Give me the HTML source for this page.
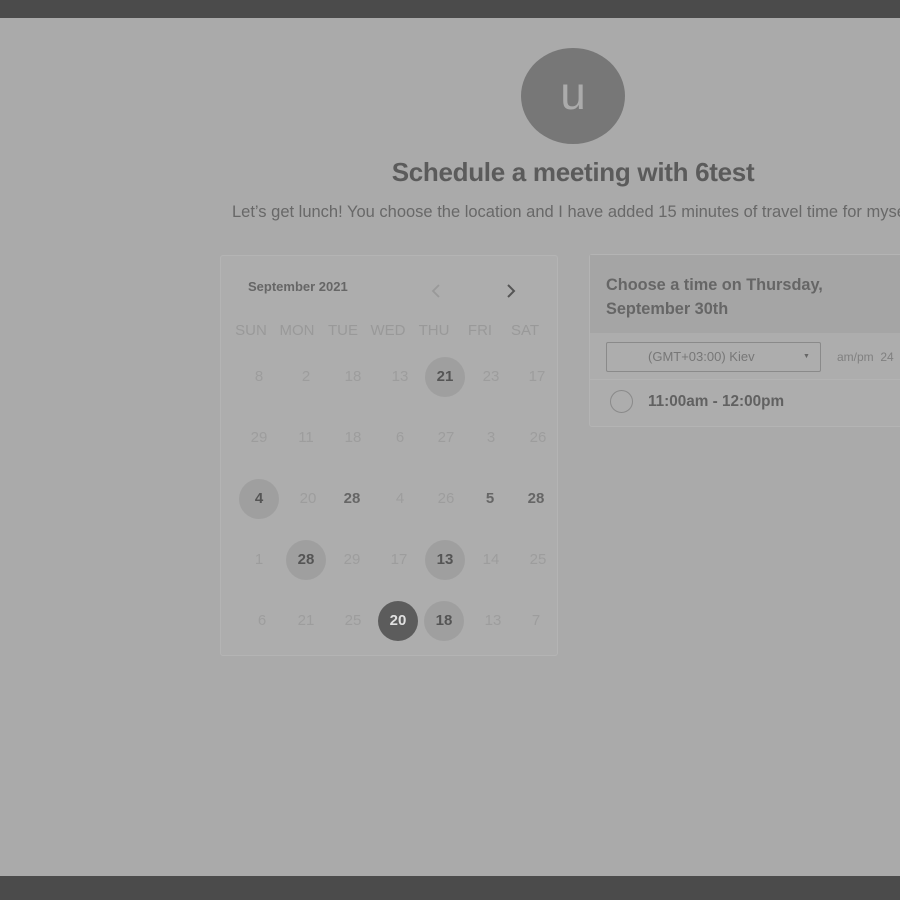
<!DOCTYPE html>
<html><head><style>
body{margin:0;width:900px;height:900px;background:#aaaaaa;position:relative;overflow:hidden;font-family:"Liberation Sans",sans-serif}
.a{position:absolute}
.bar{left:0;width:900px;background:#4b4b4b}
.c{position:absolute;width:40px;height:40px;border-radius:50%;text-align:center;line-height:40px;font-size:15px;color:#9d9d9d;transform:translate(-20px,-20px)}
.b{color:#555;font-weight:bold}
.s{background:#9f9f9f}
.h{position:absolute;font-size:15px;color:#999;transform:translateX(-50%);top:322px}
</style></head><body>
<div class="a bar" style="top:0;height:18px"></div>
<div class="a bar" style="top:876px;height:24px"></div>
<div class="a" style="left:521px;top:48px;width:104px;height:96px;border-radius:50%;background:#777;color:#ababab;font-size:46px;text-align:center;line-height:90px">u</div>
<div class="a" style="left:0;width:1146px;top:157px;text-align:center;font-size:26px;font-weight:bold;color:#5b5b5b;letter-spacing:-0.3px">Schedule a meeting with 6test</div>
<div class="a" style="left:232px;top:203px;white-space:nowrap;font-size:16.5px;color:#686868">Let’s get lunch! You choose the location and I have added 15 minutes of travel time for myself</div>
<div class="a" style="left:220px;top:255px;width:336px;height:399px;background:#adadad;border:1px solid #b4b4b4;border-radius:3px"></div>
<div class="a" style="left:248px;top:279px;font-size:13px;font-weight:bold;color:#666">September 2021</div>
<svg class="a" style="left:429px;top:283px" width="14" height="16"><path d="M10 2L4 8l6 6" stroke="#999" stroke-width="1.8" fill="none"/></svg>
<svg class="a" style="left:504px;top:283px" width="14" height="16"><path d="M4 2l6 6-6 6" stroke="#555" stroke-width="2" fill="none"/></svg>
<div class="h" style="left:251px">SUN</div><div class="h" style="left:297px">MON</div><div class="h" style="left:343px">TUE</div><div class="h" style="left:388px">WED</div><div class="h" style="left:434px">THU</div><div class="h" style="left:480px">FRI</div><div class="h" style="left:525px">SAT</div>
<div class="c" style="left:259px;top:377px">8</div><div class="c" style="left:306px;top:377px">2</div><div class="c" style="left:353px;top:377px">18</div><div class="c" style="left:400px;top:377px">13</div><div class="c b s" style="left:445px;top:377px">21</div><div class="c" style="left:491px;top:377px">23</div><div class="c" style="left:537px;top:377px">17</div>
<div class="c" style="left:259px;top:438px">29</div><div class="c" style="left:306px;top:438px">11</div><div class="c" style="left:353px;top:438px">18</div><div class="c" style="left:400px;top:438px">6</div><div class="c" style="left:446px;top:438px">27</div><div class="c" style="left:491px;top:438px">3</div><div class="c" style="left:538px;top:438px">26</div>
<div class="c b s" style="left:259px;top:499px">4</div><div class="c" style="left:308px;top:499px">20</div><div class="c b" style="left:352px;top:499px;color:#666">28</div><div class="c" style="left:400px;top:499px">4</div><div class="c" style="left:446px;top:499px">26</div><div class="c b" style="left:490px;top:499px;color:#666">5</div><div class="c b" style="left:536px;top:499px;color:#666">28</div>
<div class="c" style="left:259px;top:560px">1</div><div class="c b s" style="left:306px;top:560px">28</div><div class="c" style="left:352px;top:560px">29</div><div class="c" style="left:399px;top:560px">17</div><div class="c b s" style="left:445px;top:560px">13</div><div class="c" style="left:491px;top:560px">14</div><div class="c" style="left:538px;top:560px">25</div>
<div class="c" style="left:262px;top:621px">6</div><div class="c" style="left:306px;top:621px">21</div><div class="c" style="left:353px;top:621px">25</div><div class="c b" style="left:398px;top:621px;background:#5c5c5c;color:#e0e0e0">20</div><div class="c b s" style="left:444px;top:621px">18</div><div class="c" style="left:493px;top:621px">13</div><div class="c" style="left:536px;top:621px">7</div>
<div class="a" style="left:589px;top:254px;width:320px;height:171px;background:#adadad;border:1px solid #b4b4b4;border-radius:3px"></div>
<div class="a" style="left:590px;top:255px;width:320px;height:78px;background:#a5a5a5"></div>
<div class="a" style="left:606px;top:273px;font-size:16.3px;font-weight:bold;color:#666;line-height:24px">Choose a time on Thursday,<br>September 30th</div>
<div class="a" style="left:606px;top:342px;width:213px;height:28px;border:1px solid #8a8a8a;border-radius:2px;font-size:13px;color:#777;line-height:28px"><span style="position:absolute;left:41px">(GMT+03:00) Kiev</span><span style="position:absolute;left:196px;top:0px;font-size:7px;color:#666">▼</span></div>
<div class="a" style="left:837px;top:350px;font-size:12px;color:#808080;white-space:nowrap">am/pm&nbsp; 24</div>
<div class="a" style="left:590px;top:379px;width:320px;height:1px;background:#b3b3b3"></div>
<div class="a" style="left:610px;top:390px;width:21px;height:21px;border:1.5px solid #8a8a8a;border-radius:50%"></div>
<div class="a" style="left:648px;top:393px;font-size:15.3px;font-weight:bold;color:#616161">11:00am - 12:00pm</div>
</body></html>
